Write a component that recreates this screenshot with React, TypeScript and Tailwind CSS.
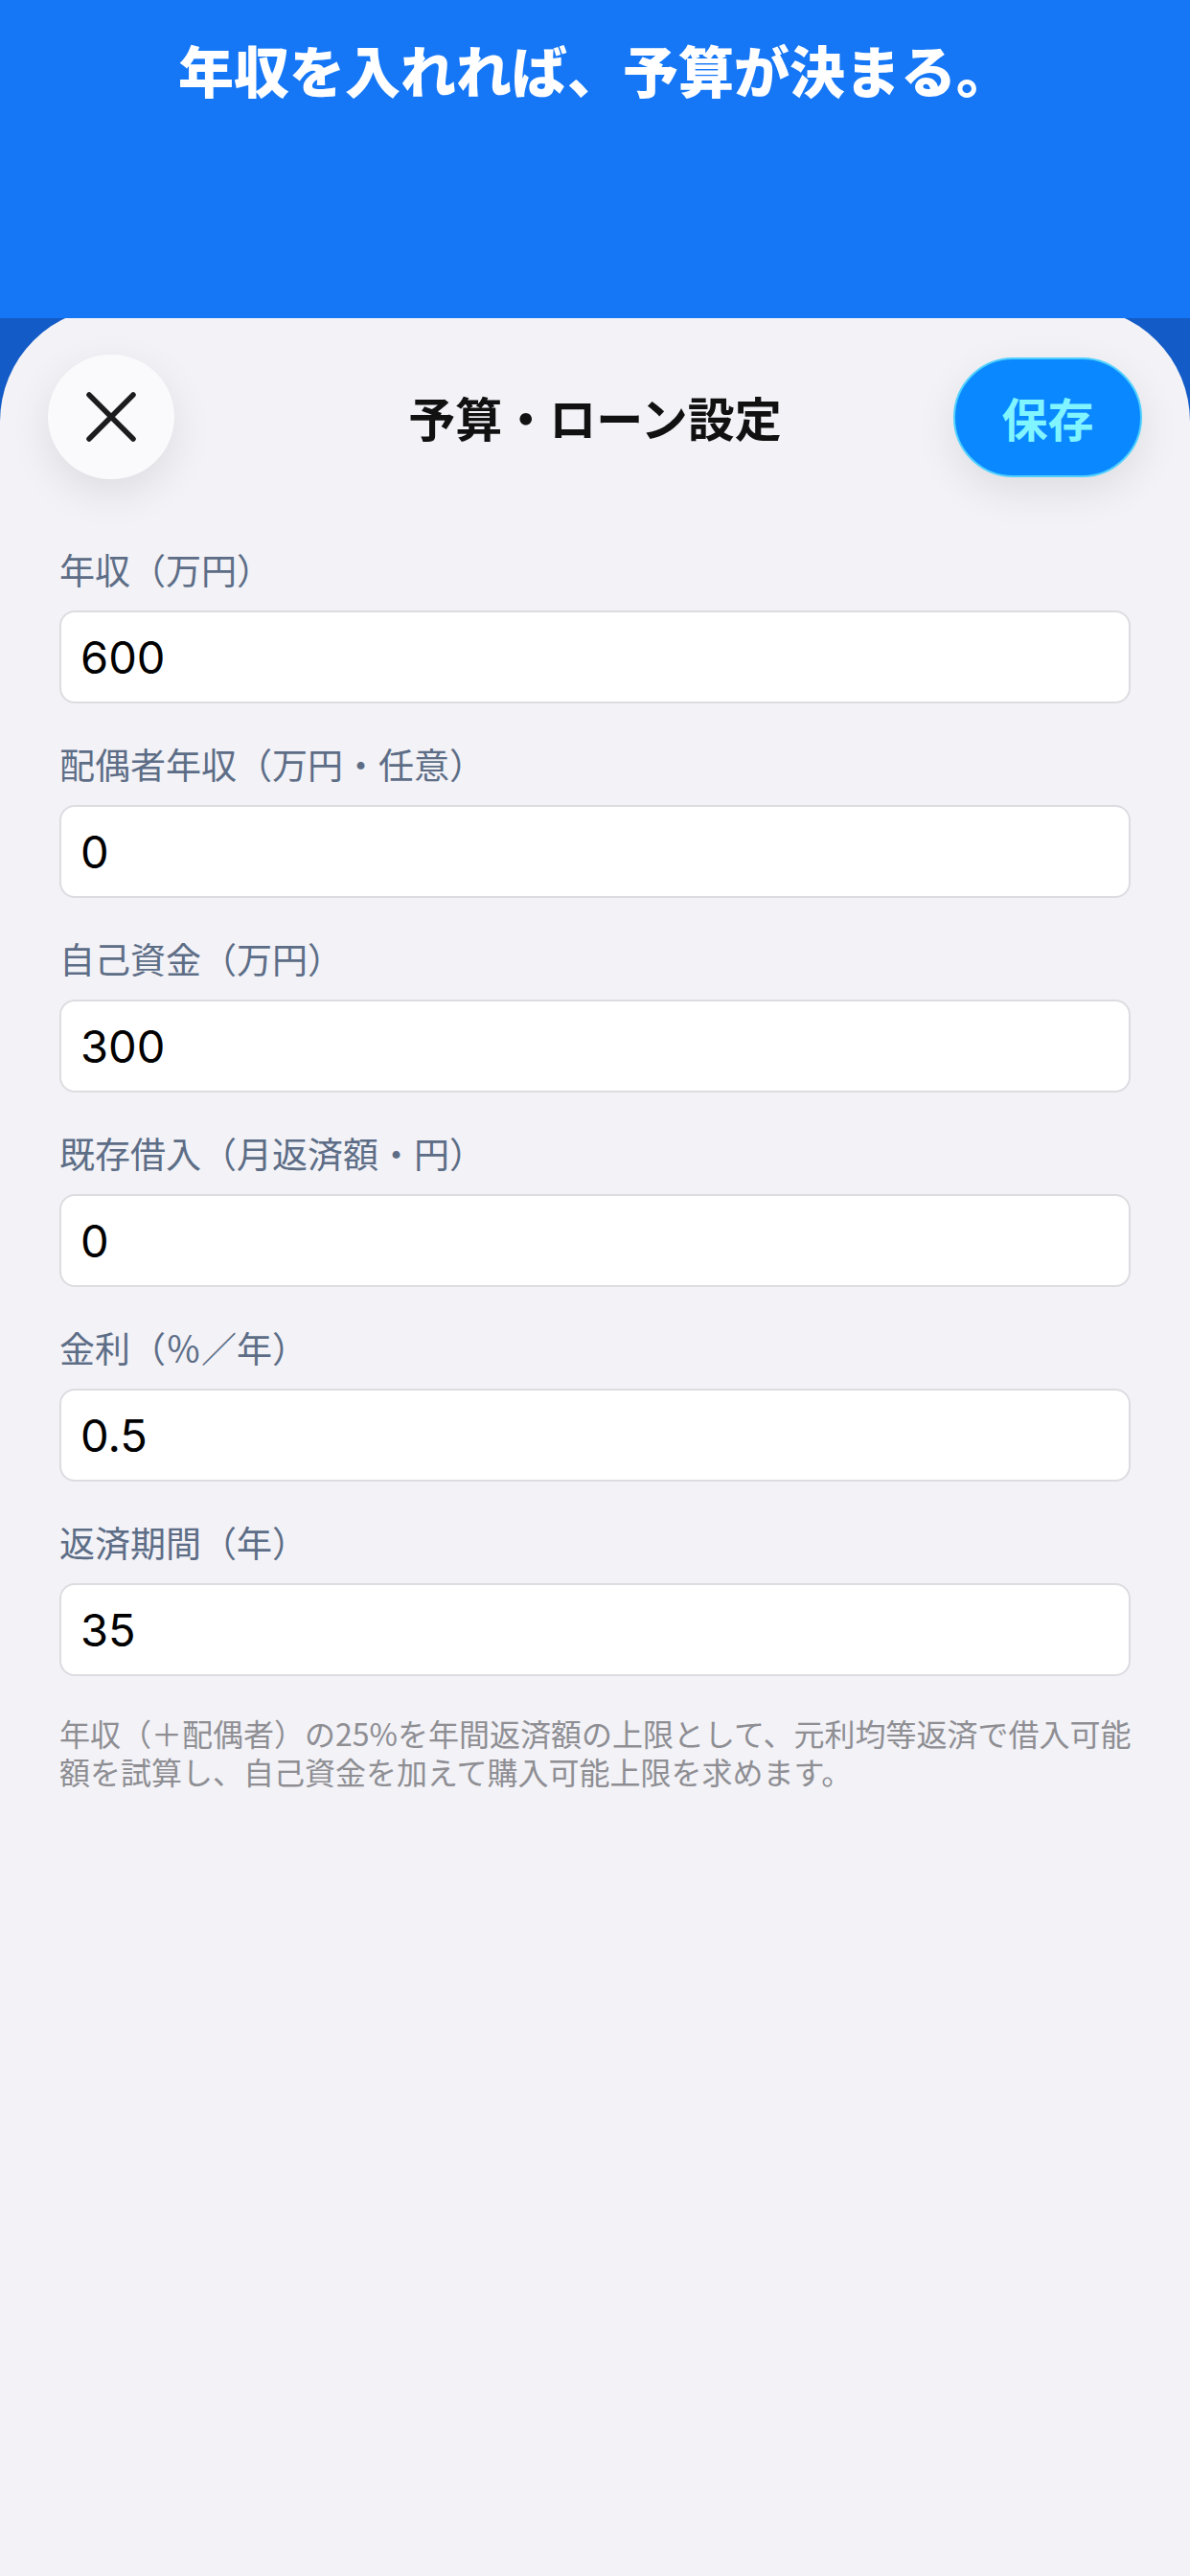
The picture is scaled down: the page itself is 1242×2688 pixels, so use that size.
import React from 'react';

// 入力項目
const fields = [
  { label: '年収（万円）', value: '600' },
  { label: '配偶者年収（万円・任意）', value: '0' },
  { label: '自己資金（万円）', value: '300' },
  { label: '既存借入（月返済額・円）', value: '0' },
  { label: '金利（％／年）', value: '0.5' },
  { label: '返済期間（年）', value: '35' },
];

function CloseIcon() {
  return (
    <svg width="54" height="54" viewBox="0 0 54 54" fill="none">
      <path d="M4 4L50 50M50 4L4 50" stroke="#1c1c1e" strokeWidth="5.5" strokeLinecap="round" />
    </svg>
  );
}

export default function App() {
  return (
    <div className="w-[1242px] min-h-[2688px] flex flex-col bg-[#135bc7] font-['Noto_Sans_CJK_JP',sans-serif]">
      {/* 上部キャッチコピー */}
      <div className="relative z-10 h-[332px] shrink-0 bg-[#1677f6] flex justify-center pt-[38px]">
        <h1 className="text-[58px] leading-[68px] font-black text-white">
          年収を入れれば、予算が決まる。
        </h1>
      </div>

      {/* シート（上端はヘッダーの裏に少し潜る） */}
      <div className="-mt-[12px] flex-1 bg-[#f2f2f7] rounded-t-[120px] flex flex-col">
        {/* ヘッダー */}
        <div className="grid grid-cols-[1fr_auto_1fr] items-center px-[50px] pt-[50px]">
          <button className="justify-self-start w-[132px] h-[130px] rounded-full bg-[#fafafc] flex items-center justify-center shadow-[0_14px_44px_rgba(0,0,0,0.09)]">
            <CloseIcon />
          </button>
          <h2 className="text-[49px] leading-[60px] font-bold text-[#111]">予算・ローン設定</h2>
          <button className="justify-self-end w-[197px] h-[125px] rounded-full bg-[#0a88ff] border-2 border-[#4fd0ff] flex items-center justify-center shadow-[0_14px_44px_rgba(0,0,0,0.09)]">
            <span className="text-[48px] font-bold text-[#80f4ff] leading-none">保存</span>
          </button>
        </div>

        {/* フォーム */}
        <div className="px-[62px] pt-[72px] flex flex-col gap-[41px]">
          {fields.map((f) => (
            <div key={f.label} className="flex flex-col gap-[21px]">
              <label className="text-[37px] leading-[44px] text-[#5d6d86]">{f.label}</label>
              <input
                readOnly
                value={f.value}
                className="h-[97px] w-full bg-white border-2 border-[#dcdce1] rounded-[16px] px-[20px] text-[47px] text-black font-['Inter','Liberation_Sans',sans-serif] outline-none"
              />
            </div>
          ))}
        </div>

        <p className="px-[62px] mt-[39px] text-[32px] leading-[40px] text-[#8e8e93] whitespace-nowrap">
          年収（＋配偶者）の25%を年間返済額の上限として、元利均等返済で借入可能
          <br />
          額を試算し、自己資金を加えて購入可能上限を求めます。
        </p>
      </div>
    </div>
  );
}
